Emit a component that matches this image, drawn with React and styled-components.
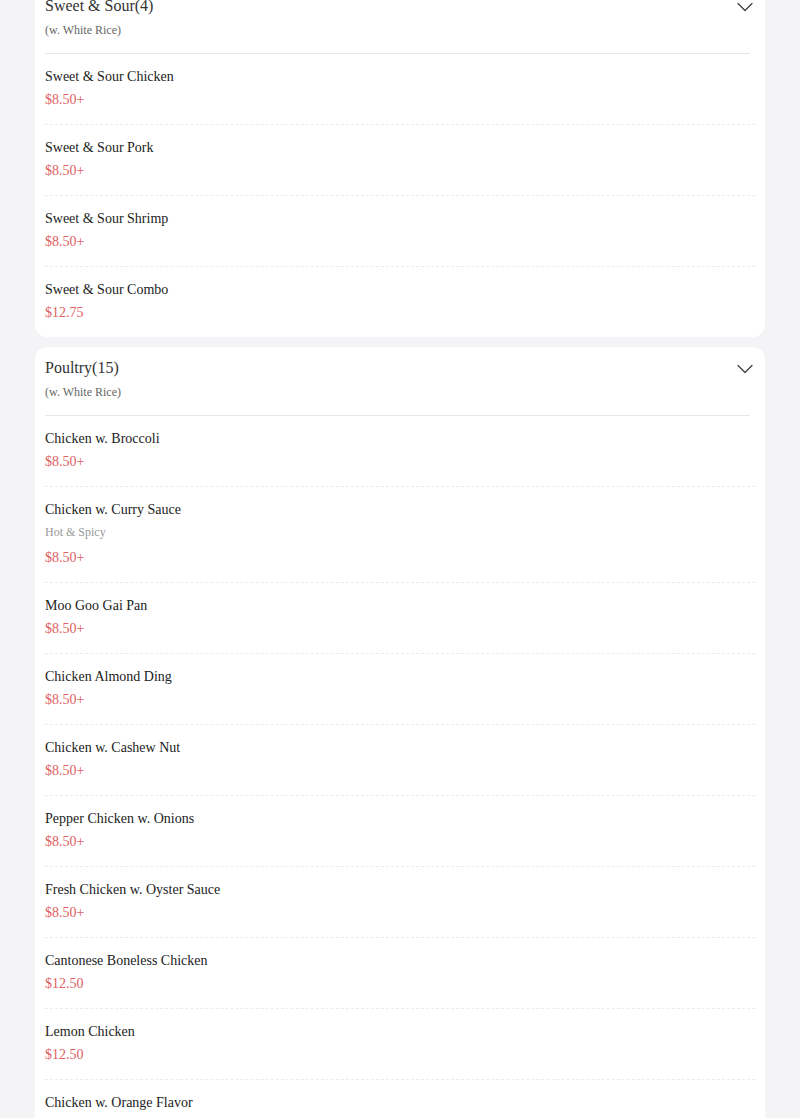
import React from 'react';
import styled, { createGlobalStyle } from 'styled-components';

const GlobalStyle = createGlobalStyle`
  html, body {
    margin: 0;
    padding: 0;
    background: #f4f4f6;
    font-family: 'Liberation Serif', 'Times New Roman', serif;
  }
`;

const Page = styled.div`
  display: flex;
  flex-direction: column;
  gap: 10px;
  padding: 0 35px 20px;
  margin-top: -15px;
`;

const Card = styled.section`
  background: #fff;
  border-radius: 12px;
  padding: 0 10px;
`;

const Header = styled.div`
  display: flex;
  justify-content: space-between;
  align-items: flex-start;
  padding: 10px 0 16px;
  margin-right: 5px;
  border-bottom: 1px solid #e6e6e6;
`;

const HeaderText = styled.div`
  display: flex;
  flex-direction: column;
`;

const Title = styled.div`
  font-size: 16px;
  line-height: 22px;
  color: #333;
`;

const Subtitle = styled.div`
  margin-top: 6px;
  font-size: 12px;
  line-height: 14px;
  color: #666;
`;

const Chevron = styled.svg`
  margin-top: 7px;
  margin-right: -3px;
  flex-shrink: 0;
`;

const Item = styled.div`
  padding: 13px 0 14px;
  border-bottom: 1px dashed #ececec;

  &:last-child {
    border-bottom: none;
  }
`;

const Name = styled.div`
  font-size: 14px;
  line-height: 20px;
  color: #222;
`;

const Desc = styled.div`
  margin-top: 4px;
  font-size: 12px;
  line-height: 16px;
  color: #999;
`;

const Price = styled.div`
  margin-top: ${(p) => (p.$afterDesc ? '8px' : '3px')};
  font-size: 14px;
  line-height: 20px;
  color: #e0605f;
`;

const sections = [
  {
    title: 'Sweet & Sour(4)',
    note: '(w. White Rice)',
    items: [
      { name: 'Sweet & Sour Chicken', price: '$8.50+' },
      { name: 'Sweet & Sour Pork', price: '$8.50+' },
      { name: 'Sweet & Sour Shrimp', price: '$8.50+' },
      { name: 'Sweet & Sour Combo', price: '$12.75' },
    ],
  },
  {
    title: 'Poultry(15)',
    note: '(w. White Rice)',
    items: [
      { name: 'Chicken w. Broccoli', price: '$8.50+' },
      { name: 'Chicken w. Curry Sauce', desc: 'Hot & Spicy', price: '$8.50+' },
      { name: 'Moo Goo Gai Pan', price: '$8.50+' },
      { name: 'Chicken Almond Ding', price: '$8.50+' },
      { name: 'Chicken w. Cashew Nut', price: '$8.50+' },
      { name: 'Pepper Chicken w. Onions', price: '$8.50+' },
      { name: 'Fresh Chicken w. Oyster Sauce', price: '$8.50+' },
      { name: 'Cantonese Boneless Chicken', price: '$12.50' },
      { name: 'Lemon Chicken', price: '$12.50' },
      { name: 'Chicken w. Orange Flavor', price: '$12.50' },
      { name: 'Sesame Chicken', price: '$12.50' },
      { name: "General Tso's Chicken", desc: 'Hot & Spicy', price: '$12.50' },
    ],
  },
];

const ChevronDown = () => (
  <Chevron width="16" height="10" viewBox="0 0 16 10" fill="none">
    <path d="M1 1.5 L8 8.5 L15 1.5" stroke="#3a3a3a" strokeWidth="1.2" strokeLinecap="round" strokeLinejoin="round" />
  </Chevron>
);

const App = () => (
  <>
    <GlobalStyle />
    <Page>
      {sections.map((s) => (
        <Card key={s.title}>
          <Header>
            <HeaderText>
              <Title>{s.title}</Title>
              <Subtitle>{s.note}</Subtitle>
            </HeaderText>
            <ChevronDown />
          </Header>
          {s.items.map((it) => (
            <Item key={it.name}>
              <Name>{it.name}</Name>
              {it.desc && <Desc>{it.desc}</Desc>}
              <Price $afterDesc={!!it.desc}>{it.price}</Price>
            </Item>
          ))}
        </Card>
      ))}
    </Page>
  </>
);

export default App;
